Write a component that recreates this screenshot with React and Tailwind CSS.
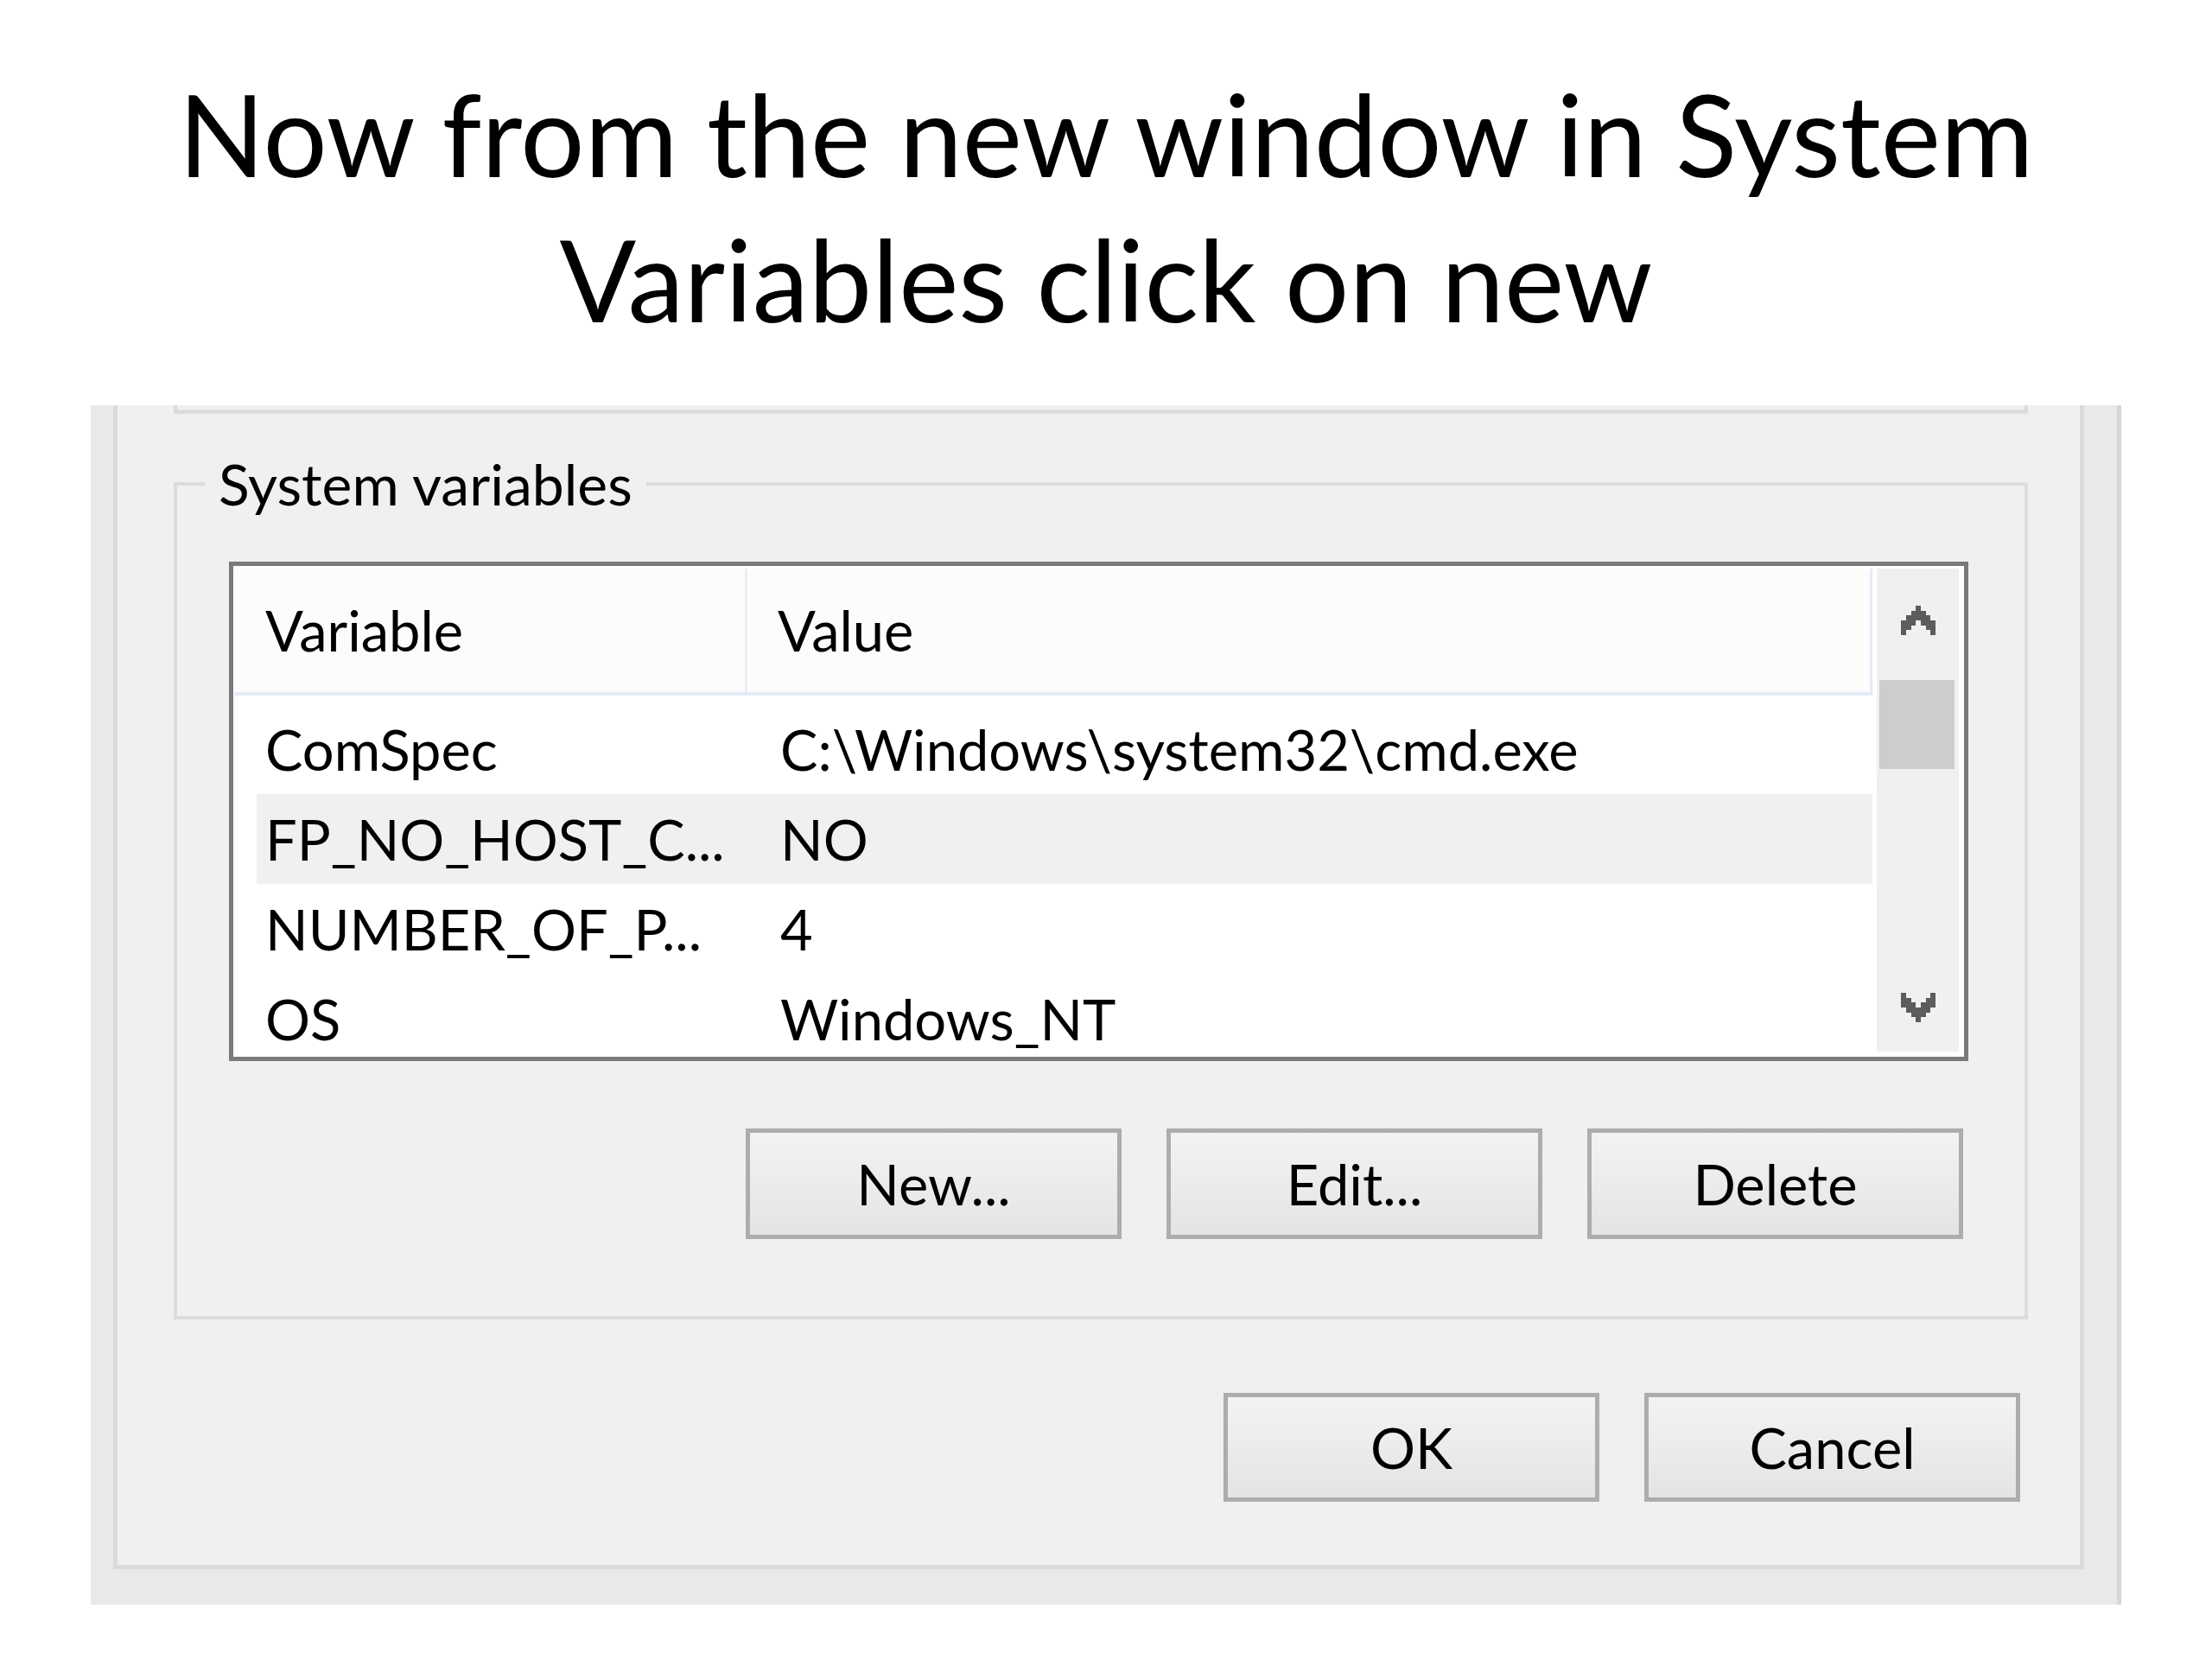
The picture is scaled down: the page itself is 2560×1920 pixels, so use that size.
import React from "react";

const rows = [
  { name: "ComSpec", value: "C:\\Windows\\system32\\cmd.exe" },
  { name: "FP_NO_HOST_C...", value: "NO", active: true },
  { name: "NUMBER_OF_P...", value: "4" },
  { name: "OS", value: "Windows_NT" },
];

// pixel chevron like the Windows 8 scrollbar arrows
const Chevron = ({ down }) => (
  <svg
    width="42"
    height="34"
    viewBox="0 0 7 6"
    shapeRendering="crispEdges"
    className={down ? "rotate-180" : ""}
    fill="#5c5c5c"
  >
    <rect x="3" y="0" width="1" height="1" />
    <rect x="2" y="1" width="3" height="1" />
    <rect x="1" y="2" width="5" height="1" />
    <rect x="0" y="3" width="3" height="1" />
    <rect x="4" y="3" width="3" height="1" />
    <rect x="0" y="4" width="2" height="1" />
    <rect x="5" y="4" width="2" height="1" />
    <rect x="0" y="5" width="1" height="1" />
    <rect x="6" y="5" width="1" height="1" />
  </svg>
);

const WinButton = ({ children, h = "h-[128px]" }) => (
  <button
    className={`w-[435px] ${h} border-[5px] border-[#adadad] bg-linear-to-b from-[#f3f3f3] to-[#e4e4e4] text-[65px] leading-none text-black flex items-center justify-center`}
  >
    {children}
  </button>
);

const App = () => {
  return (
    <div className="w-[2560px] h-[1920px] bg-white overflow-hidden font-['Lato',_'Noto_Sans',_sans-serif] text-black">
      {/* Slide title */}
      <h1 className="pt-[71px] text-center text-[131px] leading-[168px] font-normal">
        Now from the new window in System
        <br />
        Variables click on new
      </h1>

      {/* Environment Variables dialog (cropped) */}
      <div className="mt-[62px] ml-[105px] w-[2350px] h-[1388px] bg-[#e9e9e9] border-r-[5px] border-[#d6d6d6] pl-[26px] pr-[38px] pb-[41px]">
        <div className="h-full bg-[#f0f0f0] border-x-[5px] border-b-[5px] border-[#dadada] flex flex-col">
          {/* bottom edge of the User variables group */}
          <div className="ml-[65px] mr-[60px] h-[10px] border-x-4 border-b-[5px] border-[#dcdcdc]" />

          <fieldset className="mt-[41px] ml-[65px] mr-[60px] border-4 border-[#dcdcdc] pb-[89px]">
            <legend className="ml-[32px] px-[16px] text-[66px] leading-[80px]">
              System variables
            </legend>

            {/* list view */}
            <div className="mt-[50px] ml-[60px] w-[2013px] h-[578px] border-[5px] border-[#7a7a7a] bg-white flex pl-[1px] pt-[3px] pr-[6px] pb-[6px]">
              <div className="flex-1 flex flex-col overflow-hidden text-[65px] leading-[1.15]">
                <div className="h-[147px] shrink-0 bg-[#fcfcfc] border-b-4 border-r-[3px] border-[#e3ebf6] flex">
                  <div className="w-[594px] border-r-[3px] border-[#e8eef6] pl-[36px] flex items-center">
                    Variable
                  </div>
                  <div className="pl-[35px] flex items-center">Value</div>
                </div>

                <div className="pt-[10px]">
                  {rows.map((r) => (
                    <div
                      key={r.name}
                      className={`ml-[26px] h-[104px] flex items-center whitespace-nowrap ${
                        r.active ? "bg-[#f0f0f0]" : ""
                      }`}
                    >
                      <div className="w-[596px] pl-[10px]">{r.name}</div>
                      <div className="pl-[10px]">{r.value}</div>
                    </div>
                  ))}
                </div>
              </div>

              {/* scrollbar */}
              <div className="w-[95px] ml-[5px] bg-[#f0f0f0] flex flex-col">
                <div className="h-[120px] flex items-center justify-center">
                  <Chevron />
                </div>
                <div className="mt-[9px] ml-[3px] w-[87px] h-[103px] bg-[#cdcdcd]" />
                <div className="flex-1" />
                <div className="h-[102px] flex items-center justify-center">
                  <Chevron down />
                </div>
              </div>
            </div>

            <div className="mt-[78px] flex justify-end gap-[52px] pr-[71px]">
              <WinButton>New...</WinButton>
              <WinButton>Edit...</WinButton>
              <WinButton>Delete</WinButton>
            </div>
          </fieldset>

          <div className="mt-[85px] flex justify-end gap-[52px] pr-[69px]">
            <WinButton h="h-[126px]">OK</WinButton>
            <WinButton h="h-[126px]">Cancel</WinButton>
          </div>
        </div>
      </div>
    </div>
  );
};

export default App;
